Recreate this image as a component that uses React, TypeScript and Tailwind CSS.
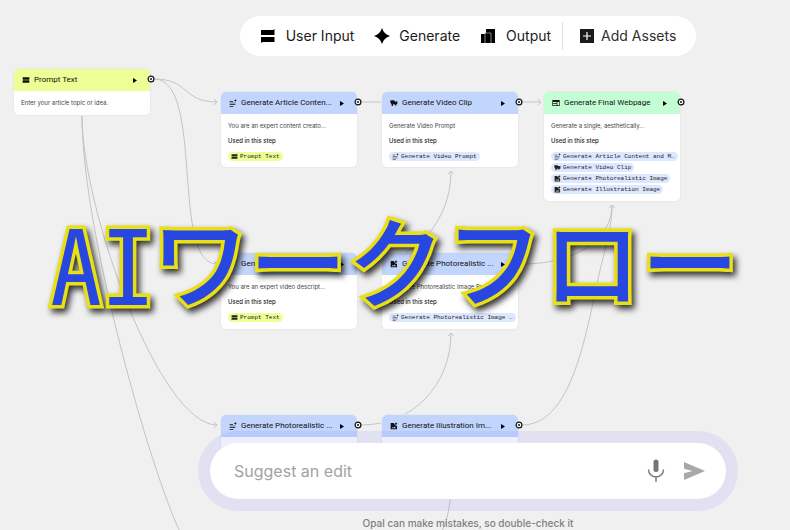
import type { ReactNode } from "react";

type IconName = "input" | "text" | "video" | "image" | "web";

type Chip = { icon: IconName; label: string };

type Node = {
  id: string;
  title: string;
  icon: IconName;
  place: string;
  header: string;
  body: string;
  chips: Chip[];
};

const icons: Record<IconName, ReactNode> = {
  input: <path d="M2 4h18l2-2v9H2zM2 13h20v7H4l-2 2z" />,
  text: (
    <path d="M2 6h10v2H2zM2 11h17v2H2zM2 16h17v2H2zM2 21h11v2H2zM19 0l1.300 3.200L23.500 4.500l-3.200 1.300L19 9l-1.300-3.200L14.500 4.500l3.200-1.300z" />
  ),
  video: (
    <path d="M2 4h11l1 3 3 1 5-2v10l-3-1v4l-3 1-3-4H9v5H5v-5H3v-4H1V6z" />
  ),
  image: (
    <path
      fillRule="evenodd"
      d="M2 3h10v4h4v4h5v11H2zM5 19h13l-4-5.500-3.500 4.500-2.500-3zM18 0l1.500 3.500L23 5l-3.500 1.500L18 10l-1.500-3.500L13 5l3.500-1.500z"
    />
  ),
  web: (
    <path
      fillRule="evenodd"
      d="M1 3h22v18H1zM3 9v4h11V9zM3 15v4h11v-4zM16 9v10h5V9z"
    />
  ),
};

const nodes: Node[] = [
  {
    id: "prompt",
    title: "Prompt Text",
    icon: "input",
    place: "left-[13px] top-[68px] w-[138px] h-[48px]",
    header: "bg-[#ecff96]",
    body: "Enter your article topic or idea.",
    chips: [],
  },
  {
    id: "article",
    title: "Generate Article Conten...",
    icon: "text",
    place: "left-[220px] top-[91px] w-[138px] h-[77px]",
    header: "bg-[#c2d5fd]",
    body: "You are an expert content creato...",
    chips: [{ icon: "input", label: "Prompt Text" }],
  },
  {
    id: "clip",
    title: "Generate Video Clip",
    icon: "video",
    place: "left-[381px] top-[91px] w-[138px] h-[77px]",
    header: "bg-[#c2d5fd]",
    body: "Generate Video Prompt",
    chips: [{ icon: "text", label: "Generate Video Prompt" }],
  },
  {
    id: "webpage",
    title: "Generate Final Webpage",
    icon: "web",
    place: "left-[543px] top-[91px] w-[138px] h-[111px]",
    header: "bg-[#c3fdd3]",
    body: "Generate a single, aesthetically...",
    chips: [
      { icon: "text", label: "Generate Article Content and M…" },
      { icon: "video", label: "Generate Video Clip" },
      { icon: "image", label: "Generate Photorealistic Image" },
      { icon: "image", label: "Generate Illustration Image" },
    ],
  },
  {
    id: "video-prompt",
    title: "Generate Video Prompt",
    icon: "text",
    place: "left-[220px] top-[252px] w-[138px] h-[78px]",
    header: "bg-[#c2d5fd]",
    body: "You are an expert video descript...",
    chips: [{ icon: "input", label: "Prompt Text" }],
  },
  {
    id: "photo",
    title: "Generate Photorealistic ...",
    icon: "image",
    place: "left-[381px] top-[252px] w-[138px] h-[78px]",
    header: "bg-[#c2d5fd]",
    body: "Generate Photorealistic Image Pr...",
    chips: [{ icon: "text", label: "Generate Photorealistic Image …" }],
  },
  {
    id: "photo-prompt",
    title: "Generate Photorealistic ...",
    icon: "text",
    place: "left-[220px] top-[414px] w-[138px] h-[77px]",
    header: "bg-[#c2d5fd]",
    body: "",
    chips: [],
  },
  {
    id: "illustration",
    title: "Generate Illustration Im...",
    icon: "image",
    place: "left-[381px] top-[414px] w-[138px] h-[77px]",
    header: "bg-[#c2d5fd]",
    body: "",
    chips: [],
  },
];

const edges = [
  "M154 79C190 79 182 102 217 102",
  "M154 79C205 79 170 264 217 264",
  "M82 116C82 210 160 425 217 425",
  "M82 116C82 230 150 470 181 534",
  "M361 102H382",
  "M522 102H541",
  "M361 264C414 264 451 222 451 171",
  "M361 425C414 425 451 384 451 333",
  "M522 264C575 264 612 240 612 205",
  "M522 425C576 425 588 318 602 262C609 232 612 222 612 205",
  "M451 480C451 510 446 530 432 548",
];

const arrows = [
  "M214 99l3 3-3 3",
  "M214 261l3 3-3 3",
  "M214 422l3 3-3 3",
  "M538 99l3 3-3 3",
  "M448 174l3-3 3 3",
  "M448 336l3-3 3 3",
  "M609 208l3-3 3 3",
];

const Icon = ({ name, className }: { name: IconName; className: string }) => (
  <svg viewBox="0 0 24 24" fill="currentColor" className={className}>
    {icons[name]}
  </svg>
);

const NodeCard = ({ node }: { node: Node }) => (
  <article className={`absolute ${node.place}`}>
    <div className="h-full overflow-hidden rounded-md border border-[#e9e9ec] bg-white">
      <header
        className={`flex h-[22px] items-center pl-2 pr-[13px] text-[#111] ${node.header}`}
      >
        <Icon name={node.icon} className="size-2 shrink-0" />
        <h2 className="ml-1 flex-1 whitespace-nowrap font-[Roboto,sans-serif] text-[8px] leading-[10px] font-normal">
          {node.title}
        </h2>
        <button type="button" aria-label={`Run ${node.title}`}>
          <svg viewBox="0 0 4 5" fill="#000" className="h-[5px] w-1">
            <path d="M0 0l4 2.500L0 5z" />
          </svg>
        </button>
      </header>
      <div className="px-[7px] pt-2 text-[6px] leading-[8px] whitespace-nowrap text-[#444]">
        <p>{node.body}</p>
        {node.chips.length > 0 && (
          <>
            <p className="mt-[7px] font-medium text-[#1b1b1b]">
              Used in this step
            </p>
            <ul className="mt-[7px] flex flex-col items-start gap-0.5">
              {node.chips.map((chip) => (
                <li
                  key={chip.label}
                  className={`flex h-[9px] items-center gap-0.5 rounded-full px-[3px] font-['Liberation_Mono',monospace] text-[#222] ${
                    chip.icon === "input" ? "bg-[#ecff96]" : "bg-[#dde7ff]"
                  }`}
                >
                  <Icon name={chip.icon} className="size-[7px] shrink-0" />
                  {chip.label}
                </li>
              ))}
            </ul>
          </>
        )}
      </div>
    </div>
    <svg viewBox="0 0 8 8" className="absolute -right-1 top-[7px] size-2">
      <circle cx="4" cy="4" r="2.900" fill="#fff" stroke="#111" strokeWidth="1.200" />
      <circle cx="4" cy="4" r="1" fill="#111" />
    </svg>
  </article>
);

const Toolbar = () => (
  <nav className="flex h-10 items-center rounded-full bg-white px-5 text-[14px] leading-5 text-[#1b1b1b]">
    <button type="button" className="flex items-center gap-[10px]">
      <svg viewBox="0 0 16 16" className="size-4">
        <path d="M1 2h12l1.500-1v6H1zM1 9h13.500v5H2.500L1 15z" />
      </svg>
      User Input
    </button>
    <button type="button" className="ml-5 flex items-center gap-[9px]">
      <svg viewBox="0 0 16 16" className="size-4">
        <path d="M8 0Q9.800 6.200 16 8 9.800 9.800 8 16 6.200 9.800 0 8 6.200 6.200 8 0z" />
      </svg>
      Generate
    </button>
    <button type="button" className="ml-5 flex items-center gap-[10px]">
      <svg viewBox="0 0 16 16" className="size-4">
        <path d="M6 1h9v14H6zM1 6h4v9H1z" />
        <path d="M5 5h6v10H5z" />
        <path d="M5 15V5h6v10" fill="none" stroke="#bbb" strokeWidth="0.700" />
      </svg>
      Output
    </button>
    <span className="ml-[11px] h-7 w-px bg-[#e3e3e3]" />
    <button
      type="button"
      className="ml-4 flex items-center gap-[6px] text-[#303030]"
    >
      <svg viewBox="0 0 16 16" className="size-4">
        <path d="M1 1h14v14H1z" fill="#1b1b1b" />
        <path d="M8 4v8M4 8h8" stroke="#fff" strokeWidth="1.200" />
      </svg>
      Add Assets
    </button>
  </nav>
);

const EditBar = () => (
  <form className="w-full max-w-[540px] rounded-full bg-[#837df5]/13 p-3">
    <div className="flex h-14 items-center rounded-full bg-white pl-6 pr-5">
      <input
        type="text"
        aria-label="Suggest an edit"
        placeholder="Suggest an edit"
        className="min-w-0 flex-1 text-[16px] leading-6 outline-none placeholder:text-[#a3a3a3]"
      />
      <button type="button" aria-label="Speak">
        <svg viewBox="0 0 24 24" className="size-6" fill="none" stroke="#757575">
          <path d="M12 3v7.500" strokeWidth="5" strokeLinecap="round" />
          <path d="M4.500 10.500a7.500 7.500 0 0 0 15 0M12 18v5" strokeWidth="1.400" />
        </svg>
      </button>
      <button type="submit" aria-label="Send" className="ml-[14px]">
        <svg viewBox="0 0 24 24" className="size-6" fill="#a8a8a8">
          <path d="M2 3v6.800L10.500 12 2 14.200V21l21-9z" />
        </svg>
      </button>
    </div>
  </form>
);

export default function App() {
  return (
    <main className="relative flex min-h-screen flex-col items-center overflow-hidden bg-[#f0f0f0] pt-4 pl-[146px] font-[Inter,sans-serif]">
      <div className="absolute inset-0">
        <svg
          className="absolute inset-0 size-full"
          fill="none"
          stroke="#c4c4c4"
          strokeWidth="1"
        >
          {[...edges, ...arrows].map((d) => (
            <path key={d} d={d} />
          ))}
        </svg>
        {nodes.map((node) => (
          <NodeCard key={node.id} node={node} />
        ))}
      </div>

      <div className="relative">
        <Toolbar />
      </div>

      <div className="relative mt-auto flex w-full flex-col items-center">
        <EditBar />
        <p className="mt-[5px] text-[10px] leading-[14px] font-medium text-[#808080]">
          Opal can make mistakes, so double-check it
        </p>
      </div>

      <h1 className="pointer-events-none absolute top-[208px] left-[50px] flex items-start whitespace-nowrap text-[#2846e0] [-webkit-text-stroke:7px_#e8e014] [paint-order:stroke_fill] [filter:drop-shadow(3px_4px_3px_rgba(0,0,0,0.8))]">
        <span className="w-[101px] font-['Noto_Sans_Mono_CJK_JP','DejaVu_Sans_Mono',monospace] text-[104px] leading-[104px] font-medium">
          AI
        </span>
        <span className="font-['Noto_Sans_CJK_JP',sans-serif] text-[98px] leading-[98px] font-medium">
          ワークフロー
        </span>
      </h1>
    </main>
  );
}
